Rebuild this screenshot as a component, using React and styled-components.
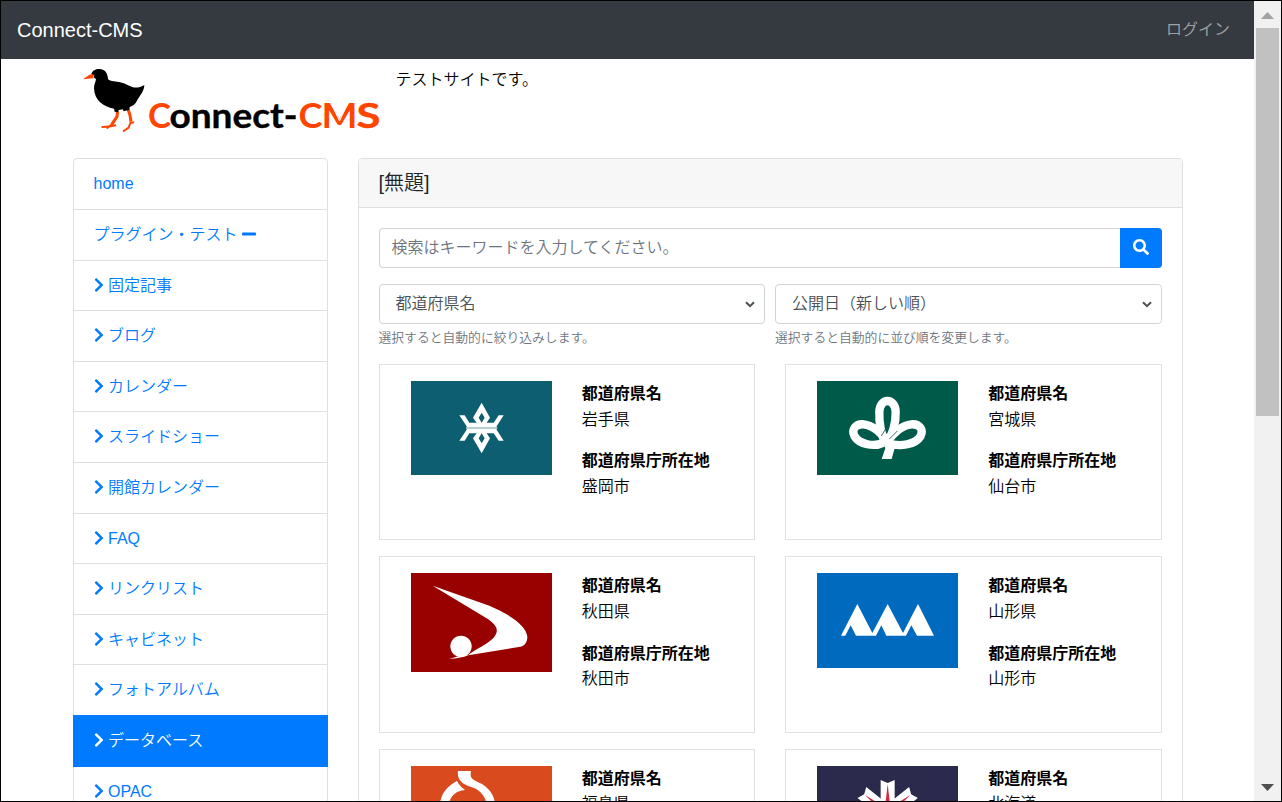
import React from 'react';
import styled, { createGlobalStyle, css } from 'styled-components';
import { FaChevronRight, FaMinus, FaSearch } from 'react-icons/fa';

const GlobalStyle = createGlobalStyle`
  *, *::before, *::after { box-sizing: border-box; }
  body {
    margin: 0;
    font-family: "Liberation Sans", "Noto Sans CJK JP", sans-serif;
    font-size: 16px;
    font-weight: 350;
    line-height: 1.6;
    color: #000;
    background: #fff;
  }
`;

const Frame = styled.div`
  display: flex;
  width: 1282px;
  height: 802px;
  border: 1px solid #000;
  overflow: hidden;
`;
const Page = styled.div`
  flex: 1;
  min-width: 0;
  overflow: hidden;
`;
const Navbar = styled.nav`
  display: flex;
  align-items: center;
  justify-content: space-between;
  height: 58px;
  padding: 0 24px 0 16px;
  background: #343a40;
`;
const Brand = styled.a`
  font-size: 20px;
  color: #fff;
`;
const LoginLink = styled.a`
  color: rgba(255, 255, 255, 0.55);
`;
const Container = styled.div`
  width: 1110px;
  margin: 0 auto;
`;
const SiteHeader = styled.header`
  display: flex;
  gap: 15px;
  height: 99.4px;
  padding-top: 8px;
`;
const LogoSvg = styled.svg`
  display: block;
  width: 308px;
  height: 75px;
`;
const SiteText = styled.p`
  margin: 0;
`;
const Columns = styled.div`
  display: grid;
  grid-template-columns: 255px 825px;
  column-gap: 30px;
  align-items: start;
`;
const Menu = styled.nav`
  display: flex;
  flex-direction: column;
`;
const MenuItem = styled.a`
  display: block;
  padding: 12px 20px;
  border: 1px solid #dfdfdf;
  border-top-width: 0;
  color: #007bff;
  &:first-child {
    border-top-width: 1px;
    border-radius: 4px 4px 0 0;
  }
  ${({ $active }) =>
    $active &&
    css`
      margin-top: -1px;
      border-top-width: 1px;
      border-color: #007bff;
      background: #007bff;
      color: #fff;
    `}
  svg {
    height: 16px;
    vertical-align: -2px;
  }
`;
const Chevron = styled(FaChevronRight)`
  width: 10px;
  margin-right: 4.5px;
`;
const Minus = styled(FaMinus)`
  width: 14px;
  margin-left: 4.5px;
`;
const Panel = styled.section`
  border: 1px solid #dfdfdf;
  border-radius: 4px;
  overflow: hidden;
`;
const PanelTitle = styled.h1`
  margin: 0;
  padding: 12px 20px;
  border-bottom: 1px solid #dfdfdf;
  background: #f7f7f7;
  color: #212529;
  font-size: 20px;
  font-weight: 350;
  line-height: 24px;
`;
const PanelBody = styled.div`
  padding: 20px;
`;
const SearchGroup = styled.div`
  display: flex;
  height: 39.6px;
  margin-bottom: 16px;
`;
const SearchInput = styled.input`
  flex: 1;
  min-width: 0;
  padding: 6px 12px;
  border: 1px solid #ced4da;
  border-right: 0;
  border-radius: 4px 0 0 4px;
  font: inherit;
  &::placeholder { color: #6c757d; opacity: 1; }
`;
const SearchButton = styled.button`
  display: flex;
  align-items: center;
  justify-content: center;
  width: 42px;
  padding: 0 0 2px;
  border: 0;
  border-radius: 0 4px 4px 0;
  background: #007bff;
  color: #fff;
  font-size: 16px;
`;
const Filters = styled.div`
  display: grid;
  grid-template-columns: 1fr 1fr;
  column-gap: 10px;
  margin-bottom: 16px;
`;
const SelectBox = styled.div`
  position: relative;
`;
const Select = styled.select`
  appearance: none;
  display: block;
  width: 100%;
  height: 39.6px;
  padding: 6px 16px;
  border: 1px solid #ced4da;
  border-radius: 4px;
  background: #fff;
  color: #495057;
  font: inherit;
`;
const Caret = styled.svg`
  position: absolute;
  top: 17px;
  right: 10px;
  width: 10px;
  height: 7px;
  fill: none;
  stroke: #495057;
  stroke-width: 2;
  pointer-events: none;
`;
const Help = styled.small`
  display: block;
  margin-top: 4px;
  font-size: 12.8px;
  color: #6c757d;
`;
const Cards = styled.div`
  display: grid;
  grid-template-columns: 1fr 1fr;
  column-gap: 30px;
  row-gap: 16px;
`;
const Card = styled.article`
  display: grid;
  grid-template-columns: 1fr 1fr;
  align-items: start;
  height: 176.4px;
  padding: 16px;
  border: 1px solid #dee2e6;
`;
const Flag = styled.svg`
  display: block;
  width: 141px;
  margin-left: 15px;
`;
const Facts = styled.dl`
  margin: 0 0 0 15px;
  dt { font-weight: 700; }
  dd { margin: 0 0 16px; }
`;
const Scrollbar = styled.div`
  display: flex;
  flex-direction: column;
  width: 27px;
  padding: 0 2px;
  background: #f1f1f1;
`;
const ScrollArrow = styled.svg`
  width: 23px;
  height: 27px;
  flex: none;
  fill: ${({ $dim }) => ($dim ? '#a3a3a3' : '#505050')};
`;
const ScrollTrack = styled.div`
  flex: 1;
`;
const ScrollThumb = styled.div`
  height: 388px;
  background: #c1c1c1;
`;

const Logo = () => (
  <LogoSvg viewBox="73 67 308 75" role="img" aria-label="Connect-CMS">
    <g transform="scale(.33333)">
      <path fill="#ff4500" d="M283 219L266 226L249 238L280 235Z" />
      <path fill="none" stroke="#ff4500" strokeWidth="9" strokeLinejoin="round" d="M353 333L351 350L335 374M384 328L390 346L393 365" />
      <path fill="none" stroke="#ff4500" strokeWidth="6" strokeLinecap="round" strokeLinejoin="round" d="M346 376L333 379L307 381M337 372L322 384M400 367L391 369L386 383L371 393" />
      <path d="M274 222C278 210 289 206 299 207C313 207 323 217 324 237C329 244 342 243 357 246C374 249 382 256 399 262C412 264 420 262 433 255C433 273 419 288 412 300C407 312 398 318 389 321L388 329L371 334L368 328L356 330L354 337L344 335L342 326C310 320 283 302 282 265C282 253 287 246 288 237C281 234 281 230 283 224Z" />
    </g>
    <g fontFamily="Lato, sans-serif" fontWeight="700" fontSize="34.5">
      <text x="148" y="127.8" fill="#ff4500" textLength="23" lengthAdjust="spacingAndGlyphs">C</text>
      <text x="169.5" y="127.8" fill="#000" stroke="#000" strokeWidth=".4" textLength="128" lengthAdjust="spacingAndGlyphs">onnect-</text>
      <text x="298.5" y="127.8" fill="#ff4500" textLength="24" lengthAdjust="spacingAndGlyphs">C</text>
      <text x="321.5" y="127.8" fill="#ff4500" textLength="36" lengthAdjust="spacingAndGlyphs">M</text>
      <text x="356.5" y="127.8" fill="#ff4500" stroke="#ff4500" strokeWidth=".4" textLength="24" lengthAdjust="spacingAndGlyphs">S</text>
    </g>
    <path fill="none" stroke="#fff" strokeWidth="1" d="M332 105L339.5 121L347 105" />
  </LogoSvg>
);

const IwateFlag = () => {
  const half = 'M178 136H194L208 158H230L219 143L245 98L270 143L260 158H281L296 136H311L290 169V174H200V169Z';
  return (
    <Flag viewBox="33 33 423 282">
      <rect x="33" y="33" width="423" height="282" fill="#0d5e70" />
      <g fill="#fff">
        <path d={half} />
        <path d={half} transform="matrix(1 0 0 -1 0 348)" />
      </g>
      <path fill="#0d5e70" d="M245 128L254 143L245 158L236 143ZM245 190L254 205L245 220L236 205Z" />
      <path stroke="#a9c4ca" strokeWidth="5" d="M198 174H292" />
    </Flag>
  );
};
const MiyagiFlag = () => (
  <Flag viewBox="51 33 423 282">
    <rect x="51" y="33" width="423" height="282" fill="#005a4a" />
    <g fill="none" stroke="#fff" strokeWidth="25">
      <path d="M257 222C240 185 237 155 238 126C239 82 286 82 287 126C288 166 276 190 264 215" />
      <path d="M262 216C245 188 218 166 191 163C165 161 154 180 163 198C178 223 222 232 250 218" />
      <path d="M262 216C278 188 307 166 334 163C360 161 371 180 362 198C347 223 303 232 262 220" />
    </g>
    <path fill="#fff" d="M249 214L276 211L284 235L275 267H245L256 235Z" />
    <path fill="none" stroke="#005a4a" strokeWidth="2.5" d="M268 158L244 198M292 183L268 207" />
  </Flag>
);
const AkitaFlag = () => (
  <Flag viewBox="33 39 423 297">
    <rect x="33" y="39" width="423" height="297" fill="#900" />
    <path fill="#fff" d="M98 77L268 137C325 162 380 195 382 231C382 245 375 257 361 260L205 286C190 292 165 296 147 297L170 290L205 285C224 267 260 255 281 233C295 216 294 201 274 185C264 176 251 170 240 163Z" />
    <circle cx="183" cy="259" r="32" fill="#fff" />
  </Flag>
);
const YamagataFlag = () => (
  <Flag viewBox="111 39 423 285">
    <rect x="111" y="39" width="423" height="285" fill="#006abf" />
    <path fill="#fff" d="M183 227L232 132L277 219L323 132L369 219L414 132L462 227H411L394 196L378 227H319L304 196L288 227H228L212 196L196 227Z" />
  </Flag>
);
const FukushimaFlag = () => (
  <Flag viewBox="411 766 141 94">
    <rect x="411" y="766" width="141" height="94" fill="#da4a1f" />
    <path fill="#fff" d="M458 771H471C469 780 475 780 482 784C491 790 495 797 495 806H487C486 796 479 789 471 787C461 784 457 779 458 771ZM440 806C440 793 449 785 457 781C459 785 462 788 465 790C454 791 449 798 449 806Z" />
  </Flag>
);
const HokkaidoFlag = () => (
  <Flag viewBox="111 618 423 282">
    <rect x="111" y="618" width="423" height="282" fill="#2b2a4c" />
    {[0, 1, 2, 3, 4, 5, 6].map((n) => (
      <g key={n} transform={`rotate(${(n * 360) / 7} 323 759)`}>
        <path fill="#fff" d="M302 660L323 669L344 660V759H302Z" />
        <path fill="#d7263d" d="M323 672L333 759H313Z" />
      </g>
    ))}
  </Flag>
);

const menu = ['固定記事', 'ブログ', 'カレンダー', 'スライドショー', '開館カレンダー', 'FAQ', 'リンクリスト', 'キャビネット', 'フォトアルバム', 'データベース', 'OPAC'];
const filters = [
  { value: '都道府県名', help: '選択すると自動的に絞り込みします。' },
  { value: '公開日（新しい順）', help: '選択すると自動的に並び順を変更します。' },
];
const prefectures = [
  { name: '岩手県', capital: '盛岡市', Emblem: IwateFlag },
  { name: '宮城県', capital: '仙台市', Emblem: MiyagiFlag },
  { name: '秋田県', capital: '秋田市', Emblem: AkitaFlag },
  { name: '山形県', capital: '山形市', Emblem: YamagataFlag },
  { name: '福島県', capital: '福島市', Emblem: FukushimaFlag },
  { name: '北海道', capital: '札幌市', Emblem: HokkaidoFlag },
];

export default function App() {
  return (
    <Frame>
      <GlobalStyle />
      <Page>
        <Navbar>
          <Brand>Connect-CMS</Brand>
          <LoginLink>ログイン</LoginLink>
        </Navbar>
        <Container>
          <SiteHeader>
            <Logo />
            <SiteText>テストサイトです。</SiteText>
          </SiteHeader>
          <Columns>
            <Menu>
              <MenuItem>home</MenuItem>
              <MenuItem>プラグイン・テスト<Minus /></MenuItem>
              {menu.map((label) => (
                <MenuItem key={label} $active={label === 'データベース'}>
                  <Chevron />{label}
                </MenuItem>
              ))}
            </Menu>
            <Panel>
              <PanelTitle>[無題]</PanelTitle>
              <PanelBody>
                <SearchGroup>
                  <SearchInput placeholder="検索はキーワードを入力してください。" />
                  <SearchButton aria-label="検索"><FaSearch /></SearchButton>
                </SearchGroup>
                <Filters>
                  {filters.map(({ value, help }) => (
                    <SelectBox key={value}>
                      <Select><option>{value}</option></Select>
                      <Caret viewBox="0 0 10 7"><path d="M1 1.2L5 5.2L9 1.2" /></Caret>
                      <Help>{help}</Help>
                    </SelectBox>
                  ))}
                </Filters>
                <Cards>
                  {prefectures.map(({ name, capital, Emblem }) => (
                    <Card key={name}>
                      <Emblem />
                      <Facts>
                        <dt>都道府県名</dt>
                        <dd>{name}</dd>
                        <dt>都道府県庁所在地</dt>
                        <dd>{capital}</dd>
                      </Facts>
                    </Card>
                  ))}
                </Cards>
              </PanelBody>
            </Panel>
          </Columns>
        </Container>
      </Page>
      <Scrollbar>
        <ScrollArrow $dim viewBox="0 0 23 27"><path d="M5 18L11.5 11L18 18Z" /></ScrollArrow>
        <ScrollTrack><ScrollThumb /></ScrollTrack>
        <ScrollArrow viewBox="0 0 23 27"><path d="M5 10L11.5 17L18 10Z" /></ScrollArrow>
      </Scrollbar>
    </Frame>
  );
}
